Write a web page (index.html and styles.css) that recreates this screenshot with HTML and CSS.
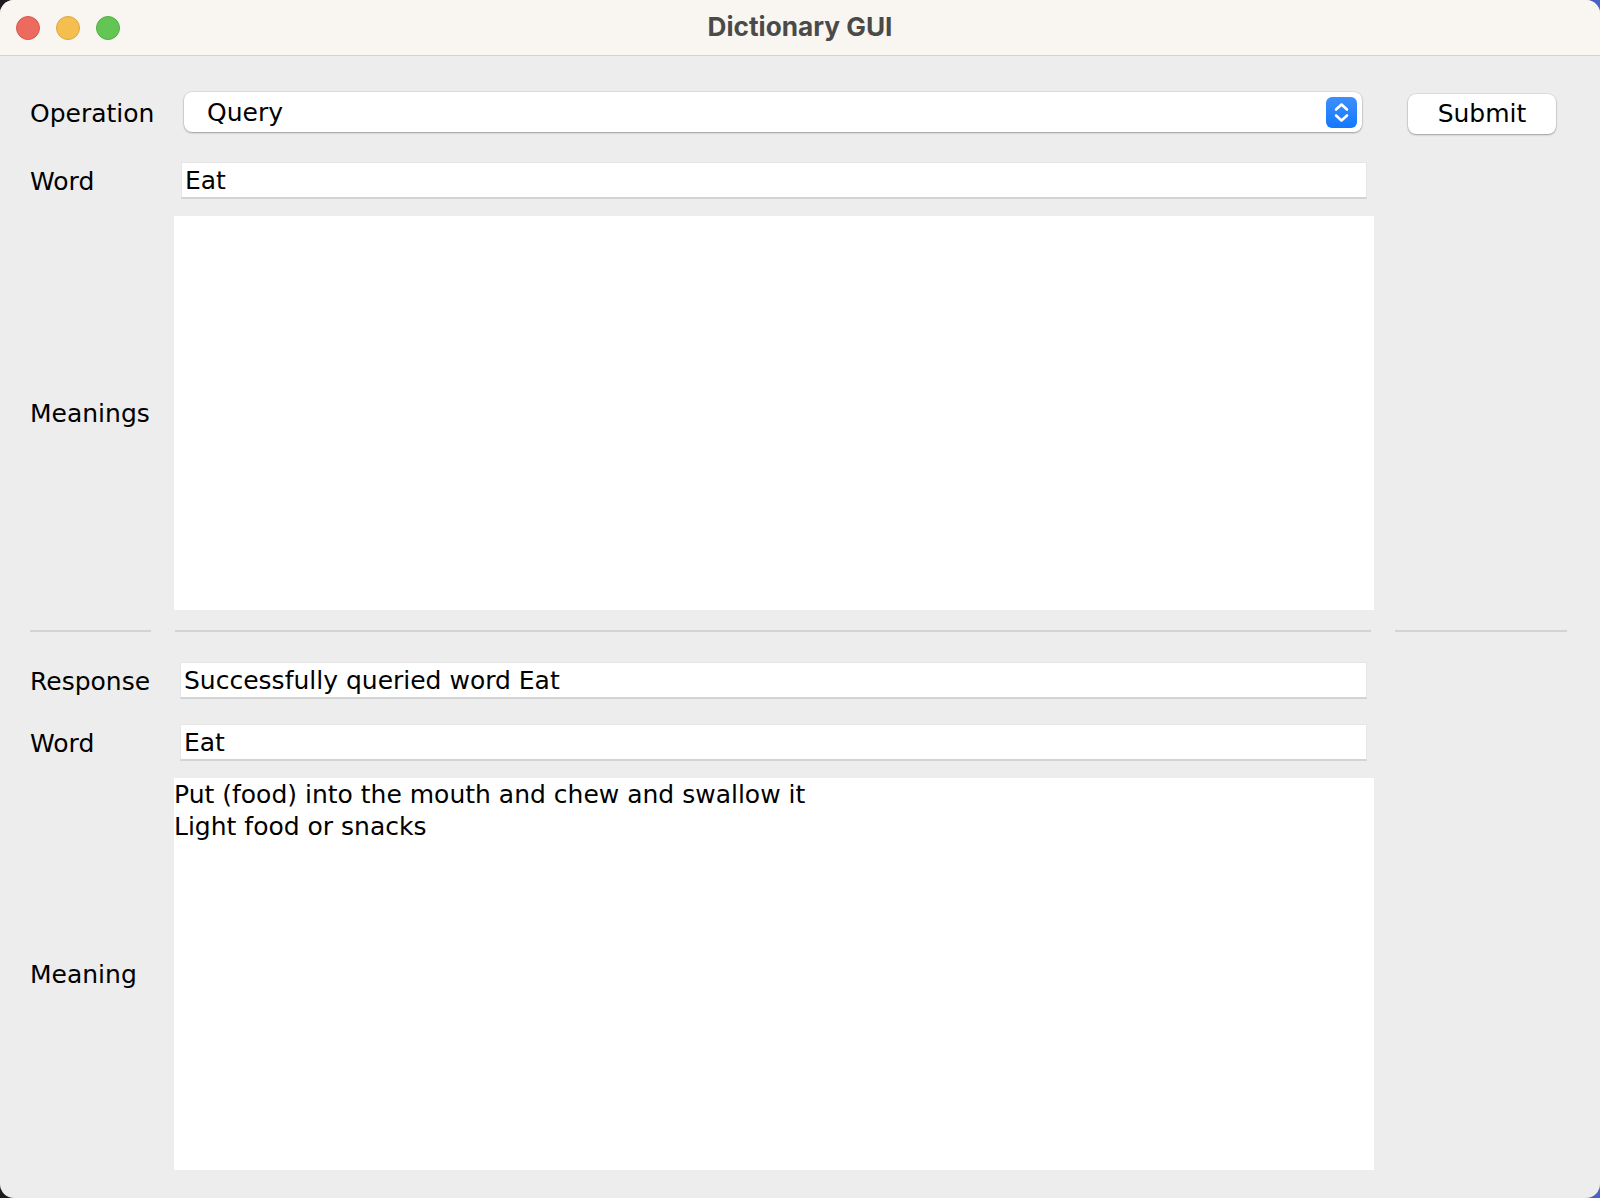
FILE: index.html
```html
<!DOCTYPE html>
<html>
<head>
<meta charset="utf-8">
<title>Dictionary GUI</title>
<link rel="stylesheet" href="styles.css">
</head>
<body>
<div class="window">
  <div class="titlebar">
    <div class="lights">
      <span class="light red"></span>
      <span class="light yellow"></span>
      <span class="light green"></span>
    </div>
    <div class="title">Dictionary GUI</div>
  </div>
  <div class="form">
    <div class="label r1 lab-combo">Operation</div>
    <div class="combo r1">
      <span class="combo-text">Query</span>
      <span class="stepper">
        <svg width="31" height="31" viewBox="0 0 31 31">
          <path d="M10 12.5 L15.5 7.5 L21 12.5" fill="none" stroke="#fff" stroke-width="2.6" stroke-linecap="round" stroke-linejoin="round"/>
          <path d="M10 18.5 L15.5 23.5 L21 18.5" fill="none" stroke="#fff" stroke-width="2.6" stroke-linecap="round" stroke-linejoin="round"/>
        </svg>
      </span>
    </div>
    <button class="submit r1">Submit</button>

    <div class="label r2 lab-field">Word</div>
    <div class="field r2 field-word">Eat</div>

    <div class="label r3 lab-area">Meanings</div>
    <div class="area r3 area-top"></div>

    <div class="sep r4 sep1"></div>
    <div class="sep r4 sep2"></div>
    <div class="sep r4 sep3"></div>

    <div class="label r5 lab-field">Response</div>
    <div class="field r5 field-resp">Successfully queried word Eat</div>

    <div class="label r6 lab-field">Word</div>
    <div class="field r6 field-resp">Eat</div>

    <div class="label r7 lab-area">Meaning</div>
    <div class="area r7 area-bottom">Put (food) into the mouth and chew and swallow it<br>Light food or snacks</div>
  </div>
</div>
</body>
</html>
```

FILE: styles.css
```css
html, body {
  margin: 0;
  padding: 0;
}
body {
  width: 1600px;
  height: 1198px;
  background: linear-gradient(90deg, #1c1c1e 0%, #1c1c1e 90%, #4a63c9 100%);
  font-family: "DejaVu Sans", "Noto Sans", sans-serif;
  overflow: hidden;
}
.window {
  width: 1600px;
  height: 1198px;
  background: #ededed;
  border-radius: 14px;
  overflow: hidden;
  display: flex;
  flex-direction: column;
}
.titlebar {
  height: 55px;
  flex: 0 0 55px;
  background: #f9f6f2;
  border-bottom: 1px solid #d6d3cf;
  position: relative;
  display: flex;
  align-items: center;
  justify-content: center;
}
.lights {
  position: absolute;
  left: 16px;
  top: 16px;
  display: flex;
  gap: 16px;
}
.light {
  width: 24px;
  height: 24px;
  border-radius: 50%;
  box-sizing: border-box;
}
.red { background: #ed6a5e; border: 1px solid #d55a4f; }
.yellow { background: #f5bf4f; border: 1px solid #dba73e; }
.green { background: #62c554; border: 1px solid #53ae46; }
.title {
  font-family: Inter, "Liberation Sans", sans-serif;
  font-weight: 700;
  font-size: 26.2px;
  color: #4b4a49;
  margin-top: -2px;
}

.form {
  display: grid;
  grid-template-columns: 120px 23px 1200px 21px 172px;
  grid-template-rows: 42px 65px 411px 22px 67px 62px 409px;
  padding: 36px 0 0 31px;
  box-sizing: border-box;
}
.form > * { box-sizing: border-box; }

.r1 { grid-row: 1; }
.r2 { grid-row: 2; }
.r3 { grid-row: 3; }
.r4 { grid-row: 4; }
.r5 { grid-row: 5; }
.r6 { grid-row: 6; }
.r7 { grid-row: 7; }

.label {
  grid-column: 1;
  font-size: 25px;
  color: #000;
  white-space: nowrap;
  display: flex;
  align-items: center;
  padding-top: 2px;
  margin-left: -1px;
}
.lab-combo { align-self: start; height: 40px; padding-top: 3px; }
.lab-field { align-self: end; height: 37px; }
.lab-area { align-self: end; height: 394px; padding-top: 0; }
.r7.lab-area { height: 392px; padding-top: 0; }

.combo {
  grid-column: 3;
  align-self: start;
  height: 40px;
  margin: 0 12px 0 10px;
  background: #fff;
  border-radius: 8px;
  box-shadow: 0 0 0 0.5px rgba(0,0,0,0.12), 0 1px 2px rgba(0,0,0,0.3);
  display: flex;
  align-items: center;
  justify-content: space-between;
  padding: 0 5px 0 23px;
}
.combo-text {
  font-size: 25px;
  color: #000;
}
.stepper {
  width: 31px;
  height: 31px;
  border-radius: 6px;
  background: linear-gradient(#3e8ffd, #1577fe);
  display: flex;
}
.submit {
  grid-column: 5;
  align-self: start;
  margin: 2px 11px 0 13px;
  height: 40px;
  background: #fff;
  border: none;
  border-radius: 8px;
  box-shadow: 0 0 0 0.5px rgba(0,0,0,0.12), 0 1px 2px rgba(0,0,0,0.3);
  font-family: "DejaVu Sans", "Noto Sans", sans-serif;
  font-size: 25px;
  color: #000;
  padding: 0 0 2px;
}

.field {
  grid-column: 3;
  align-self: end;
  height: 37px;
  background: #fff;
  border: 1px solid #e6e6e6;
  border-bottom: 2px solid #d3d3d3;
  font-size: 25px;
  color: #000;
  line-height: 35px;
  padding-left: 3px;
  white-space: nowrap;
}
.field-word { margin: 0 7px 0 7px; }
.field-resp { margin: 0 7px 0 6px; }

.area {
  grid-column: 3;
  align-self: end;
  background: #fff;
}
.area-top { height: 394px; }
.area-bottom {
  height: 392px;
  font-size: 25px;
  line-height: 31.5px;
  color: #000;
  padding-top: 1px;
  padding-left: 0;
}

.sep {
  align-self: end;
  height: 2px;
  background: #d3d3d3;
}
.sep1 { grid-column: 1; margin-left: -1px; }
.sep2 { grid-column: 3; margin: 0 3px 0 1px; }
.sep3 { grid-column: 5; }
```
